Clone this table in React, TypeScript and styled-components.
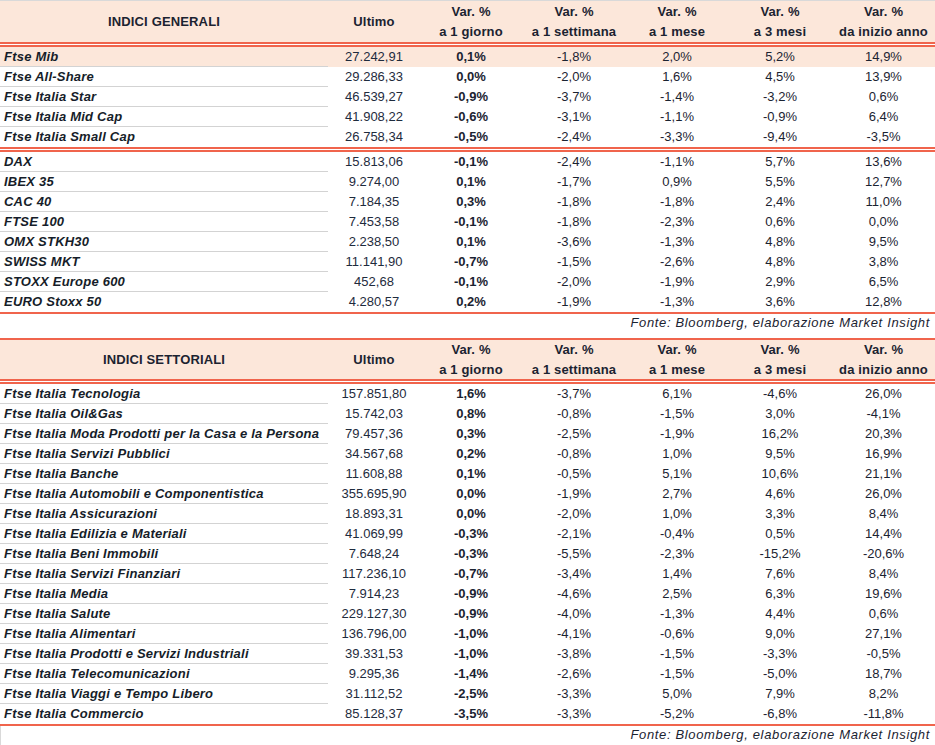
import React from "react";
import styled, { createGlobalStyle } from "styled-components";

const Global = createGlobalStyle`
  html, body { margin: 0; padding: 0; background: #ffffff; }
  body { font-family: "Liberation Sans", Arial, sans-serif; color: #1b2331; }
`;

const COLS = "328px 92px 102px 104px 102px 104px 103px";
const RED = "#f0644c";
const PEACH = "#fce7da";
const GREY = "#d3d3d3";

const Page = styled.div`
  width: 935px;
  border-top: 1px solid #d9d9d9;
  display: flex;
  flex-direction: column;
`;

const HeaderRow = styled.div<{ $h: number; $topRule?: boolean }>`
  display: grid;
  grid-template-columns: ${COLS};
  height: ${(p) => p.$h}px;
  background: ${PEACH};
  border-top: ${(p) => (p.$topRule ? `2px solid ${RED}` : "none")};
  font-weight: 700;
  font-size: 13px;
  color: #1b2331;
`;

const HeadCell = styled.div`
  display: flex;
  flex-direction: column;
  align-items: center;
  justify-content: center;
  line-height: 20px;
  white-space: nowrap;
  letter-spacing: 0.15px;
`;

const DoubleRule = styled.div`
  height: 5px;
  box-sizing: border-box;
  border-top: 2px solid ${RED};
  border-bottom: 2px solid ${RED};
`;

const SingleRule = styled.div`
  height: 2px;
  background: ${RED};
`;

const Row = styled.div<{ $hl?: boolean }>`
  display: grid;
  grid-template-columns: ${COLS};
  height: 20px;
  background: ${(p) => (p.$hl ? PEACH : "transparent")};
  font-size: 13px;
`;

const NameCell = styled.div<{ $last?: boolean }>`
  box-sizing: border-box;
  padding-left: 4px;
  line-height: 19px;
  border-bottom: ${(p) => (p.$last ? "none" : `1px solid ${GREY}`)};
  font-weight: 700;
  font-style: italic;
  letter-spacing: 0.22px;
  white-space: nowrap;
  color: #161d29;
`;

const ValueCell = styled.div<{ $bold?: boolean; $tone?: "blue" }>`
  text-align: center;
  line-height: 20px;
  font-weight: ${(p) => (p.$bold ? 700 : 400)};
  color: ${(p) => (p.$tone === "blue" ? "#1e2b3d" : "#1b2331")};
  white-space: nowrap;
`;

const Source = styled.div<{ $h: number; $left?: boolean }>`
  height: ${(p) => p.$h}px;
  box-sizing: border-box;
  padding-right: 5px;
  text-align: right;
  font-style: italic;
  font-size: 13px;
  line-height: 18px;
  letter-spacing: 0.65px;
  color: #1b2331;
  border-left: ${(p) => (p.$left ? "1px solid #d9d9d9" : "none")};
`;

type Data = [string, string, string, string, string, string, string];

const generali1: Data[] = [
  ["Ftse Mib", "27.242,91", "0,1%", "-1,8%", "2,0%", "5,2%", "14,9%"],
  ["Ftse All-Share", "29.286,33", "0,0%", "-2,0%", "1,6%", "4,5%", "13,9%"],
  ["Ftse Italia Star", "46.539,27", "-0,9%", "-3,7%", "-1,4%", "-3,2%", "0,6%"],
  ["Ftse Italia Mid Cap", "41.908,22", "-0,6%", "-3,1%", "-1,1%", "-0,9%", "6,4%"],
  ["Ftse Italia Small Cap", "26.758,34", "-0,5%", "-2,4%", "-3,3%", "-9,4%", "-3,5%"],
];

const generali2: Data[] = [
  ["DAX", "15.813,06", "-0,1%", "-2,4%", "-1,1%", "5,7%", "13,6%"],
  ["IBEX 35", "9.274,00", "0,1%", "-1,7%", "0,9%", "5,5%", "12,7%"],
  ["CAC 40", "7.184,35", "0,3%", "-1,8%", "-1,8%", "2,4%", "11,0%"],
  ["FTSE 100", "7.453,58", "-0,1%", "-1,8%", "-2,3%", "0,6%", "0,0%"],
  ["OMX STKH30", "2.238,50", "0,1%", "-3,6%", "-1,3%", "4,8%", "9,5%"],
  ["SWISS MKT", "11.141,90", "-0,7%", "-1,5%", "-2,6%", "4,8%", "3,8%"],
  ["STOXX Europe 600", "452,68", "-0,1%", "-2,0%", "-1,9%", "2,9%", "6,5%"],
  ["EURO Stoxx 50", "4.280,57", "0,2%", "-1,9%", "-1,3%", "3,6%", "12,8%"],
];

const settoriali: Data[] = [
  ["Ftse Italia Tecnologia", "157.851,80", "1,6%", "-3,7%", "6,1%", "-4,6%", "26,0%"],
  ["Ftse Italia Oil&Gas", "15.742,03", "0,8%", "-0,8%", "-1,5%", "3,0%", "-4,1%"],
  ["Ftse Italia Moda Prodotti per la Casa e la Persona", "79.457,36", "0,3%", "-2,5%", "-1,9%", "16,2%", "20,3%"],
  ["Ftse Italia Servizi Pubblici", "34.567,68", "0,2%", "-0,8%", "1,0%", "9,5%", "16,9%"],
  ["Ftse Italia Banche", "11.608,88", "0,1%", "-0,5%", "5,1%", "10,6%", "21,1%"],
  ["Ftse Italia Automobili e Componentistica", "355.695,90", "0,0%", "-1,9%", "2,7%", "4,6%", "26,0%"],
  ["Ftse Italia Assicurazioni", "18.893,31", "0,0%", "-2,0%", "1,0%", "3,3%", "8,4%"],
  ["Ftse Italia Edilizia e Materiali", "41.069,99", "-0,3%", "-2,1%", "-0,4%", "0,5%", "14,4%"],
  ["Ftse Italia Beni Immobili", "7.648,24", "-0,3%", "-5,5%", "-2,3%", "-15,2%", "-20,6%"],
  ["Ftse Italia Servizi Finanziari", "117.236,10", "-0,7%", "-3,4%", "1,4%", "7,6%", "8,4%"],
  ["Ftse Italia Media", "7.914,23", "-0,9%", "-4,6%", "2,5%", "6,3%", "19,6%"],
  ["Ftse Italia Salute", "229.127,30", "-0,9%", "-4,0%", "-1,3%", "4,4%", "0,6%"],
  ["Ftse Italia Alimentari", "136.796,00", "-1,0%", "-4,1%", "-0,6%", "9,0%", "27,1%"],
  ["Ftse Italia Prodotti e Servizi Industriali", "39.331,53", "-1,0%", "-3,8%", "-1,5%", "-3,3%", "-0,5%"],
  ["Ftse Italia Telecomunicazioni", "9.295,36", "-1,4%", "-2,6%", "-1,5%", "-5,0%", "18,7%"],
  ["Ftse Italia Viaggi e Tempo Libero", "31.112,52", "-2,5%", "-3,3%", "5,0%", "7,9%", "8,2%"],
  ["Ftse Italia Commercio", "85.128,37", "-3,5%", "-3,3%", "-5,2%", "-6,8%", "-11,8%"],
];

const Header: React.FC<{ title: string; h: number; topRule?: boolean }> = ({ title, h, topRule }) => (
  <HeaderRow $h={h} $topRule={topRule}>
    <HeadCell>{title}</HeadCell>
    <HeadCell>Ultimo</HeadCell>
    <HeadCell><span>Var. %</span><span>a 1 giorno</span></HeadCell>
    <HeadCell><span>Var. %</span><span>a 1 settimana</span></HeadCell>
    <HeadCell><span>Var. %</span><span>a 1 mese</span></HeadCell>
    <HeadCell><span>Var. %</span><span>a 3 mesi</span></HeadCell>
    <HeadCell><span>Var. %</span><span>da inizio anno</span></HeadCell>
  </HeaderRow>
);

const Rows: React.FC<{ data: Data[]; highlightFirst?: boolean }> = ({ data, highlightFirst }) => (
  <>
    {data.map((d, i) => (
      <Row key={d[0]} $hl={highlightFirst && i === 0}>
        <NameCell $last={i === data.length - 1}>{d[0]}</NameCell>
        <ValueCell $tone="blue">{d[1]}</ValueCell>
        <ValueCell $bold>{d[2]}</ValueCell>
        <ValueCell>{d[3]}</ValueCell>
        <ValueCell>{d[4]}</ValueCell>
        <ValueCell>{d[5]}</ValueCell>
        <ValueCell>{d[6]}</ValueCell>
      </Row>
    ))}
  </>
);

export default function App() {
  return (
    <>
      <Global />
      <Page>
        <Header title="INDICI GENERALI" h={41} />
        <DoubleRule />
        <Rows data={generali1} highlightFirst />
        <DoubleRule />
        <Rows data={generali2} />
        <SingleRule />
        <Source $h={24}>Fonte: Bloomberg, elaborazione Market Insight</Source>
        <Header title="INDICI SETTORIALI" h={39} topRule />
        <DoubleRule />
        <Rows data={settoriali} />
        <SingleRule />
        <Source $h={20} $left>Fonte: Bloomberg, elaborazione Market Insight</Source>
      </Page>
    </>
  );
}
